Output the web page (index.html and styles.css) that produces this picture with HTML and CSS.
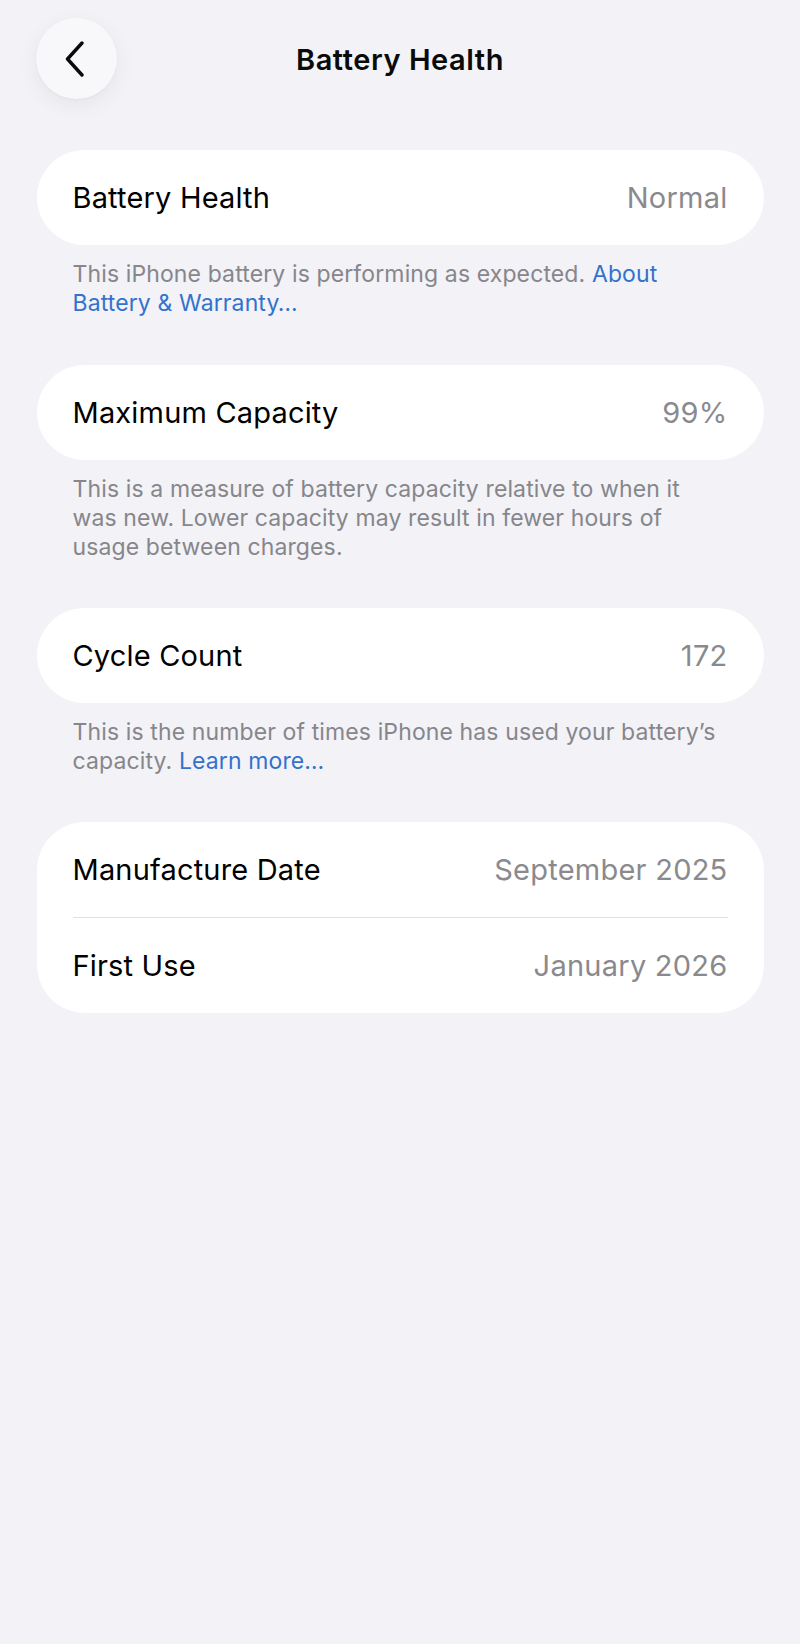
FILE: index.html
```html
<!DOCTYPE html>
<html lang="en">
<head>
<meta charset="utf-8">
<title>Battery Health</title>
<link rel="stylesheet" href="styles.css">
</head>
<body>
<div class="screen">
  <header class="nav">
    <button class="back" aria-label="Back">
      <svg width="22" height="36" viewBox="0 0 22 36" fill="none">
        <path d="M18 2 L3.5 18 L18 34" stroke="#0a0a0a" stroke-width="3.4" stroke-linecap="round" stroke-linejoin="round"/>
      </svg>
    </button>
    <h1 class="title">Battery Health</h1>
    <div class="spacer"></div>
  </header>

  <main class="content">
    <section class="group">
      <div class="card">
        <div class="row"><span class="label">Battery Health</span><span class="value">Normal</span></div>
      </div>
      <p class="footer">This iPhone battery is performing as expected. <a class="link" href="#">About Battery &amp; Warranty…</a></p>
    </section>

    <section class="group">
      <div class="card">
        <div class="row"><span class="label">Maximum Capacity</span><span class="value">99%</span></div>
      </div>
      <p class="footer">This is a measure of battery capacity relative to when it was new. Lower capacity may result in fewer hours of usage between charges.</p>
    </section>

    <section class="group">
      <div class="card">
        <div class="row"><span class="label">Cycle Count</span><span class="value">172</span></div>
      </div>
      <p class="footer">This is the number of times iPhone has used your battery’s capacity. <a class="link" href="#">Learn more…</a></p>
    </section>

    <section class="group">
      <div class="card card-multi">
        <div class="row"><span class="label">Manufacture Date</span><span class="value">September 2025</span></div>
        <div class="sep"></div>
        <div class="row"><span class="label">First Use</span><span class="value">January 2026</span></div>
      </div>
    </section>
  </main>
</div>
</body>
</html>
```

FILE: styles.css
```css
* { box-sizing: border-box; }

html, body {
  margin: 0;
  padding: 0;
  background: #f2f2f7;
}

body {
  font-family: Inter, "Noto Sans", "Liberation Sans", sans-serif;
  color: #000;
  min-height: 1644px;
}

.screen {
  width: 800px;
  min-height: 1644px;
}

.nav {
  display: grid;
  grid-template-columns: 1fr auto 1fr;
  align-items: center;
  padding: 18px 36px 0 36px;
  height: 99px;
}

.back {
  width: 81px;
  height: 81px;
  border-radius: 50%;
  border: none;
  background: #f8f8fa;
  box-shadow: 0 6px 22px rgba(0, 0, 0, 0.06), 0 1px 3px rgba(0, 0, 0, 0.03);
  display: flex;
  align-items: center;
  justify-content: center;
  padding: 0 4px 0 0;
  justify-self: start;
}

.title {
  margin: 0;
  font-size: 29px;
  font-weight: 600;
  letter-spacing: 0.55px;
  color: #0a0a0a;
  line-height: 36px;
  padding-top: 2px;
}

.content {
  padding: 51px 36.5px 0 36.5px;
  display: flex;
  flex-direction: column;
}

.group {
  display: flex;
  flex-direction: column;
  margin-bottom: 46px;
}

.group:first-child {
  margin-bottom: 47px;
}

.card {
  background: #fff;
  border-radius: 48px;
  display: flex;
  flex-direction: column;
}

.row {
  height: 95px;
  display: flex;
  align-items: center;
  justify-content: space-between;
  padding: 0 36px;
}

.label {
  font-size: 29px;
  color: #000;
  letter-spacing: 0.18px;
}

.value {
  font-size: 29px;
  color: #8a8a8e;
  letter-spacing: 0.25px;
}

.sep {
  height: 1px;
  background: #e1e1e4;
  margin: 0 36px;
}

.footer {
  margin: 0;
  padding: 15px 36px 0 36px;
  font-size: 23px;
  line-height: 29px;
  letter-spacing: 0.12px;
  color: #86868b;
}

.link {
  color: #3372cc;
  text-decoration: none;
}
```
